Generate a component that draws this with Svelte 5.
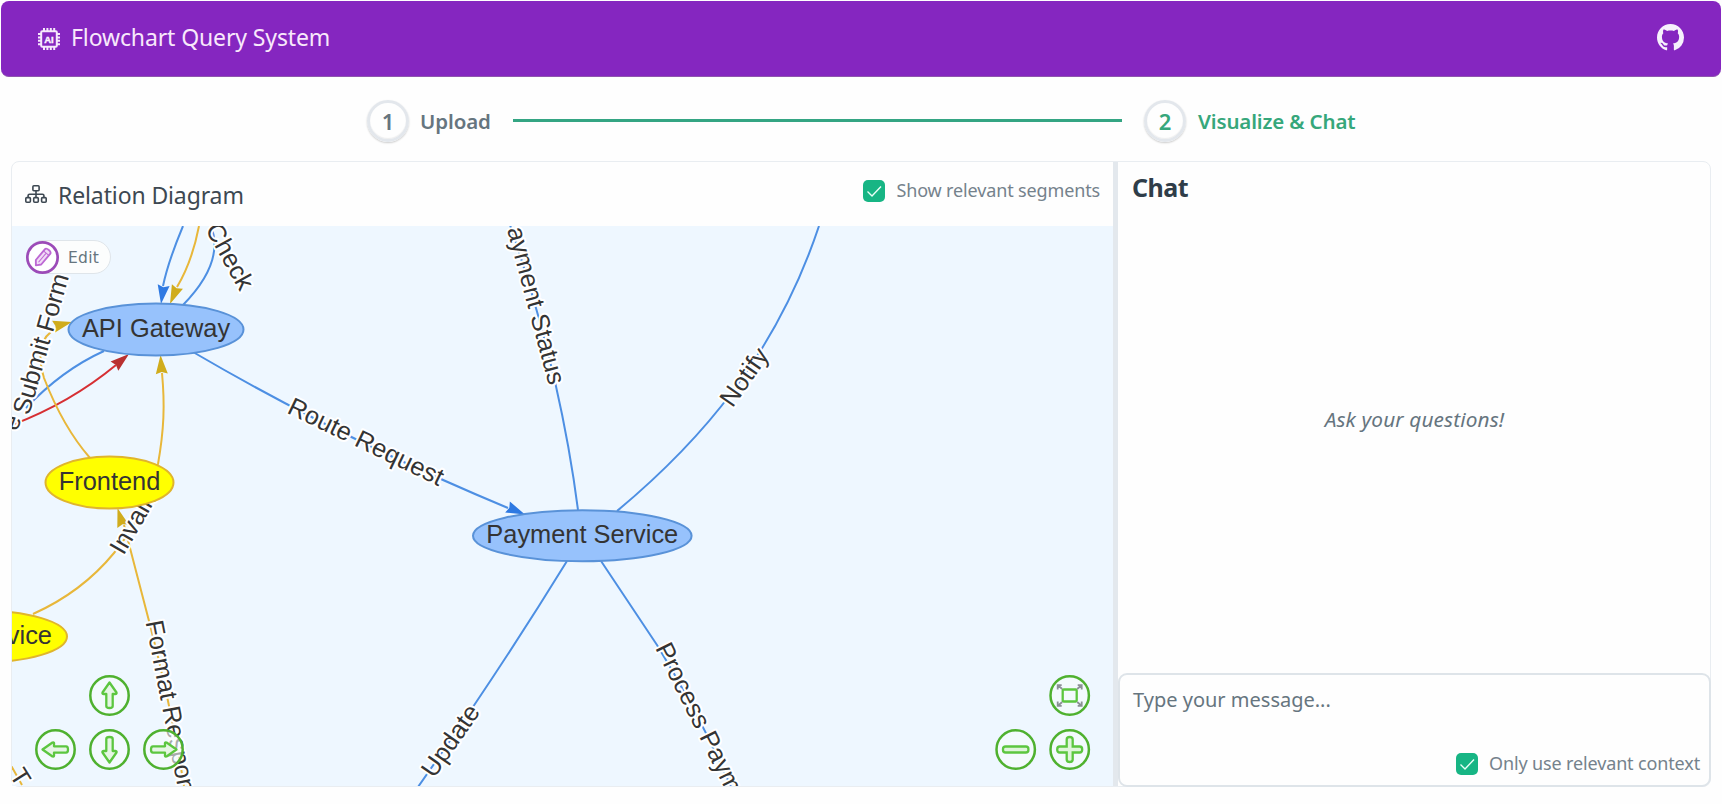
<script>
  let showSegments = $state(true);
  let onlyRelevant = $state(true);

  const edges = [
    { d: 'M183 226 Q168 262 163 286', kind: 'blue' },
    { d: 'M199 226 Q192 262 177 287', kind: 'gold' },
    { d: 'M211 226 Q225 262 183 305', kind: 'blue' },
    { d: 'M104 351 Q62 370 26 408', kind: 'blue' },
    { d: 'M12 425 Q70 403 116 365', kind: 'red' },
    { d: 'M90 458 Q63 427 44 378 C37 356 40 336 56 329', kind: 'gold' },
    { d: 'M158 464 C164 430 165 405 162 373', kind: 'gold' },
    { d: 'M33 614 Q82 592 114 553 Q146 514 158 464', kind: 'gold' },
    { d: 'M124 525 L149 621 Q171 705 184 786', kind: 'gold' },
    { d: 'M9 762 L22 785', kind: 'gold' },
    { d: 'M193 352 Q340 438 508 508', kind: 'blue' },
    { d: 'M578 510 Q560 370 509 222', kind: 'blue' },
    { d: 'M617 511 C700 442 776 355 819 226', kind: 'blue' },
    { d: 'M567 561 Q500 670 418 787', kind: 'blue' },
    { d: 'M601 561 L657 645 Q700 715 731 787', kind: 'blue' }
  ];

  const arrows = [
    { x: 161, y: 304, angle: 98, kind: 'blue' },
    { x: 170, y: 304, angle: 113, kind: 'gold' },
    { x: 72, y: 322, angle: -14, kind: 'gold' },
    { x: 129, y: 354, angle: -40, kind: 'red' },
    { x: 160.5, y: 355, angle: -94, kind: 'gold' },
    { x: 117.5, y: 508, angle: -107, kind: 'gold' },
    { x: 525, y: 514.5, angle: 23, kind: 'blue' }
  ];

  const labels = [
    { x: 205, y: 229, angle: 61, text: 'Check' },
    { x: 17, y: 432, angle: -70, text: 'e' },
    { x: 29, y: 416, angle: -74, text: 'Submit Form' },
    { x: 123.5, y: 556, angle: -60, text: 'Invalid' },
    { x: 145.5, y: 622, angle: 79, text: 'Format Response' },
    { x: 9, y: 775, angle: 58, text: 'T' },
    { x: 286, y: 412.5, angle: 25.8, text: 'Route Request' },
    { x: 549, y: 386, angle: 75, text: 'Payment Status', end: true },
    { x: 732.5, y: 408.5, angle: -55, text: 'Notify' },
    { x: 434, y: 779, angle: -55, text: 'Update' },
    { x: 655, y: 648, angle: 63.6, text: 'Process Payment' }
  ];

  const nodes = [
    { cx: 156, cy: 329.5, rx: 87.5, ry: 26, text: 'API Gateway', kind: 'service' },
    { cx: 109.5, cy: 482.5, rx: 64, ry: 26, text: 'Frontend', kind: 'client' },
    { cx: -20, cy: 636.5, rx: 87, ry: 26, text: 'Auth Service', kind: 'client' },
    { cx: 582.3, cy: 535.7, rx: 109.3, ry: 25.5, text: 'Payment Service', kind: 'service' }
  ];

  const navButtons = [
    { x: 109.5, y: 695.5, icon: 'arrow', angle: 0 },
    { x: 55.5, y: 749.5, icon: 'arrow', angle: -90 },
    { x: 109.5, y: 749.5, icon: 'arrow', angle: 180 },
    { x: 163.5, y: 749.5, icon: 'arrow', angle: 90 },
    { x: 1069.7, y: 695.5, icon: 'fit', angle: 0 },
    { x: 1015.7, y: 749.5, icon: 'minus', angle: 0 },
    { x: 1069.7, y: 749.5, icon: 'plus', angle: 0 }
  ];
</script>

{#snippet checkbox(on)}
  <svg class="box" viewBox="0 0 22 22">
    <rect width="22" height="22" rx="5" fill={on ? '#17b584' : '#d5dbe0'} />
    {#if on}<path d="M4.5 11.5 L9 16 L18 6.5" fill="none" stroke="#e9fff7" stroke-width="1.4" />{/if}
  </svg>
{/snippet}

<div class="page">
  <header>
    <svg class="chip" viewBox="0 0 22 22" fill="none" stroke="#f6e8fb">
      <rect x="3.2" y="3.2" width="15.6" height="15.6" rx="1" stroke-width="2" />
      <path stroke-width="2" d="M6 0V3M9.4 0V3M12.8 0V3M16.2 0V3M6 19V22M9.4 19V22M12.8 19V22M16.2 19V22M0 6H3M0 9.4H3M0 12.8H3M0 16.2H3M19 6H22M19 9.4H22M19 12.8H22M19 16.2H22" />
      <text x="11" y="14.6" text-anchor="middle" fill="#fdf4ff" stroke="#fdf4ff" stroke-width="0.4">AI</text>
    </svg>
    <h1>Flowchart Query System</h1>
    <svg class="github" viewBox="0 0 16 16" fill="#f6f1fc">
      <path d="M8 0C3.58 0 0 3.58 0 8c0 3.54 2.29 6.53 5.47 7.59.4.07.55-.17.55-.38 0-.19-.01-.82-.01-1.49-2.01.37-2.53-.49-2.69-.94-.09-.23-.48-.94-.82-1.13-.28-.15-.68-.52-.01-.53.63-.01 1.08.58 1.23.82.72 1.21 1.87.87 2.33.66.07-.52.28-.87.51-1.07-1.78-.2-3.64-.89-3.64-3.95 0-.87.31-1.59.82-2.15-.08-.2-.36-1.02.08-2.12 0 0 .67-.21 2.2.82.64-.18 1.32-.27 2-.27s1.36.09 2 .27c1.53-1.04 2.2-.82 2.2-.82.44 1.1.16 1.92.08 2.12.51.56.82 1.27.82 2.15 0 3.07-1.87 3.75-3.65 3.95.29.25.54.73.54 1.48 0 1.07-.01 1.93-.01 2.2 0 .21.15.46.55.38A8.01 8.01 0 0 0 16 8c0-4.42-3.58-8-8-8z" />
    </svg>
  </header>

  <nav>
    <span class="num">1</span>
    <span class="step upload">Upload</span>
    <span class="line"></span>
    <span class="num active">2</span>
    <span class="step active chatstep">Visualize &amp; Chat</span>
  </nav>

  <main>
    <section class="diagram">
      <div class="bar">
        <svg class="tree" viewBox="0 0 22 18" fill="none" stroke="#3d4852" stroke-width="1.6">
          <rect x="7.9" y="0.8" width="6.2" height="5" rx="1" />
          <rect x="0.8" y="12.6" width="4.6" height="4.6" rx="1" />
          <rect x="8.7" y="12.6" width="4.6" height="4.6" rx="1" />
          <rect x="16.6" y="12.6" width="4.6" height="4.6" rx="1" />
          <path d="M11 6V12.5M3.1 12.5V10.6Q3.1 9.2 4.6 9.2H17.4Q18.9 9.2 18.9 10.6V12.5" />
        </svg>
        <h2>Relation Diagram</h2>
        <button class="check" onclick={() => (showSegments = !showSegments)}>
          {@render checkbox(showSegments)}
          <span class="seg">Show relevant segments</span>
        </button>
      </div>
      <div class="canvas">
        <svg viewBox="12 226 1101 560" width="1101" height="560">
          {#each edges as e}<path class="edge {e.kind}" d={e.d} />{/each}
          {#each arrows as a}
            <path class="tip {a.kind}" d="M0 0 L-19 6 L-17 0 L-19 -6 Z" transform="translate({a.x} {a.y}) rotate({a.angle})" />
          {/each}
          {#each labels as l}
            <text class="label" text-anchor={l.end ? 'end' : 'start'} transform="translate({l.x} {l.y}) rotate({l.angle})">{l.text}</text>
          {/each}
          {#each nodes as n}
            <ellipse class={n.kind} cx={n.cx} cy={n.cy} rx={n.rx} ry={n.ry} />
            <text class="name" x={n.cx} y={n.cy + 7.3} text-anchor="middle">{n.text}</text>
          {/each}
          {#each navButtons as b}
            <g transform="translate({b.x} {b.y}) rotate({b.angle})" fill="none" stroke="#5cc63f" stroke-width="2.3">
              <circle r="19.2" fill="#f7fcfb" fill-opacity=".6" stroke="#4fb12f" stroke-width="2.5" />
              {#if b.icon === 'arrow'}
                <path d="M0 -13 L7 -3 Q7.5 -1 5 -1.5 L3.2 -1.5 V10.5 Q3.2 12.5 0 12.5 Q-3.2 12.5 -3.2 10.5 V-1.5 L-5 -1.5 Q-7.5 -1 -7 -3 Z" fill="#e6f6e4" stroke-linejoin="round" />
              {:else if b.icon === 'minus'}
                <rect x="-12.7" y="-3" width="25.4" height="6" rx="2.6" fill="#dff5da" />
              {:else if b.icon === 'plus'}
                <path d="M-3 -3V-10Q-3 -12.5 0 -12.5Q3 -12.5 3 -10V-3H10Q12.5 -3 12.5 0Q12.5 3 10 3H3V10Q3 12.5 0 12.5Q-3 12.5 -3 10V3H-10Q-12.5 3 -12.5 0Q-12.5 -3 -10 -3Z" fill="#dff5da" />
              {:else}
                <rect x="-7" y="-6" width="14" height="12" rx="1" />
                <path stroke="#8b9095" stroke-width="1.8" d="M-7.5 -6.5L-11.5 -10M-12 -6V-10.3H-8M7.5 -6.5L11.5 -10M12 -6V-10.3H8M-7.5 6.5L-11.5 10M-12 6V10.3H-8M7.5 6.5L11.5 10M12 6V10.3H8" />
              {/if}
            </g>
          {/each}
        </svg>
        <button class="edit">
          <svg viewBox="0 0 32 32" fill="none">
            <circle cx="16" cy="16" r="14.7" fill="#fff" stroke="#9c4bb8" stroke-width="2.6" />
            <g transform="translate(16 16) rotate(40)" stroke="#bd68d4" stroke-width="1.8" fill="#f1dcf6">
              <path d="M-3.4 -7.5Q-3.4 -9.5 0 -9.5Q3.4 -9.5 3.4 -7.5V6L0 10L-3.4 6Z" stroke-linejoin="round" />
              <path d="M-3.4 -5.5H3.4M0 -5V6" stroke-width="1" />
            </g>
          </svg>
          <span>Edit</span>
        </button>
      </div>
    </section>
    <div class="divider"></div>
    <section class="chat">
      <h3>Chat</h3>
      <div class="empty"><em>Ask your questions!</em></div>
      <div class="composer">
        <p>Type your message...</p>
        <button class="check" onclick={() => (onlyRelevant = !onlyRelevant)}>
          {@render checkbox(onlyRelevant)}
          <span class="ctx">Only use relevant context</span>
        </button>
      </div>
    </section>
  </main>
</div>

<style>
  :global(body) { margin: 0; background: #fefefe; }
  * { box-sizing: border-box; }
  .page { width: 1722px; height: 804px; overflow: hidden; padding: 1px; font-family: "Noto Sans", "Open Sans", sans-serif; color: #66757f; }
  h1, h2, h3, p { margin: 0; font-weight: 400; white-space: nowrap; }
  span, em { white-space: nowrap; }
  button { font: inherit; color: inherit; border: 0; padding: 0; background: none; }
  header { height: 76px; background: #8526c0; border-radius: 8px; display: flex; align-items: center; padding: 0 37px; border-bottom: 1px solid #8f55ae; }
  .chip { width: 22px; height: 22px; margin-right: 11px; }
  .chip text { font: 700 9.5px "Liberation Sans", sans-serif; }
  h1 { font-size: 23px; letter-spacing: -0.12px; color: #f8e8fb; flex: 1; padding-bottom: 4px; }
  .github { width: 27px; height: 27px; margin-top: -3px; }
  nav { height: 84px; display: flex; align-items: center; padding: 3px 0 0 366px; }
  .num { width: 42px; height: 42px; border-radius: 50%; border: 3px solid #e3e7ec; box-shadow: 0 1px 2px #0003, inset 0 -1px 1px #0001; display: flex; align-items: center; justify-content: center; font-size: 22px; font-weight: 600; color: #66757f; padding-top: 1px; }
  .step { font-size: 20.5px; font-weight: 600; margin-left: 11px; padding-top: 1px; }
  .upload { width: 72px; letter-spacing: -0.1px; }
  .line { width: 609px; height: 3px; background: #34a583; margin: 0 22px 0 21px; }
  .active { color: #36a77b; }
  .chatstep { margin-left: 12px; letter-spacing: -0.15px; }
  main { margin-left: 10px; width: 1700px; height: 626px; display: flex; border: 1px solid #e9edf1; border-radius: 8px; }
  .diagram { width: 1101px; display: flex; flex-direction: column; }
  .bar { height: 64px; display: flex; align-items: center; padding: 0 13px; }
  .tree { width: 22px; height: 18px; margin-right: 11px; }
  h2 { font-size: 23px; color: #3d4852; letter-spacing: -0.12px; flex: 1; padding-top: 2px; }
  .check { display: flex; align-items: center; }
  .box { width: 22px; height: 22px; }
  .bar .check { margin-top: -6px; }
  .seg, .ctx { font-size: 18px; letter-spacing: -0.14px; margin-left: 11px; padding-bottom: 2px; color: #75828c; }
  .canvas { position: relative; width: 1101px; height: 560px; background: #eef7ff; overflow: hidden; }
  .canvas > svg { display: block; }
  .edge { fill: none; stroke-width: 2; }
  .edge.blue { stroke: #4d8fe3; }
  .edge.gold { stroke: #e8b73a; }
  .edge.red { stroke: #d62f33; }
  .tip.blue { fill: #2e79e2; }
  .tip.gold { fill: #d0ac1c; }
  .tip.red { fill: #b93030; }
  .label, .name { font: 25.4px "Liberation Sans", Arial, sans-serif; fill: #343434; }
  .label { stroke: #fff; stroke-width: 4px; paint-order: stroke; stroke-linejoin: round; }
  .service { fill: #97c2fc; stroke: #5992d8; stroke-width: 2; }
  .client { fill: #ffff00; stroke: #e0b52c; stroke-width: 2; }
  .edit { position: absolute; left: 14px; top: 14px; height: 34px; width: 85px; border-radius: 17px; border: 1px solid #dfe5ea; background: #fcfdfd; display: flex; align-items: center; }
  .edit svg { width: 33px; height: 33px; flex: none; margin-left: -1px; }
  .edit span { font: 15.5px "DejaVu Sans", Verdana, sans-serif; letter-spacing: 0.3px; margin: 2px 0 0 9px; }
  .divider { width: 5px; background: #e3e8ed; }
  .chat { flex: 1; display: flex; flex-direction: column; margin-right: -1px; margin-bottom: -1px; }
  h3 { font-size: 25px; font-weight: 700; color: #2f3d49; height: 56px; line-height: 51px; padding-left: 14px; letter-spacing: -0.5px; }
  .empty { flex: 1; display: flex; justify-content: center; padding-top: 184px; font-size: 20.8px; letter-spacing: 0.12px; line-height: 34px; }
  .composer { height: 114px; border: 2px solid #dee4e9; border-radius: 9px; padding: 10px 9px 8px 13px; display: flex; flex-direction: column; justify-content: space-between; }
  .composer p { font-size: 20px; line-height: 29px; }
  .composer .check { align-self: flex-end; height: 26px; }
</style>
